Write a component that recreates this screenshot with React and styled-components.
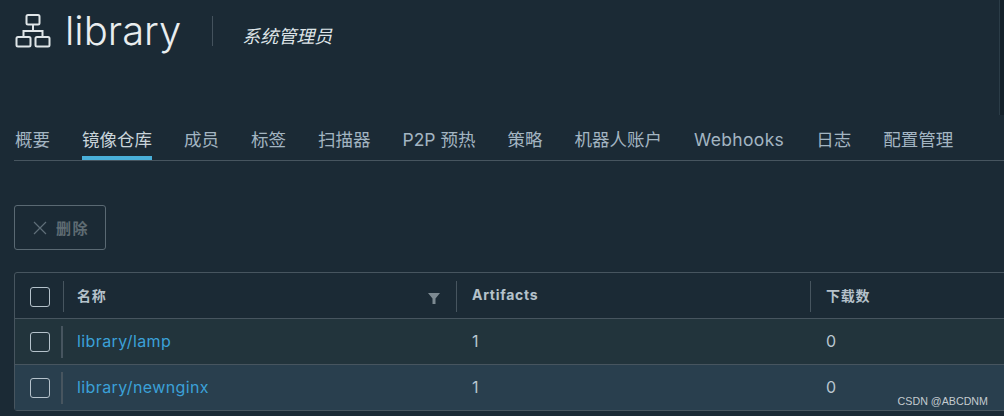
import styled, { createGlobalStyle } from "styled-components";

const fonts = `Inter, "Noto Sans CJK SC", sans-serif`;
const tabs = ["概要", "镜像仓库", "成员", "标签", "扫描器", "P2P 预热", "策略", "机器人账户", "Webhooks", "日志", "配置管理"];
const rows = [
  { name: "library/lamp", artifacts: 1, pulls: 0 },
  { name: "library/newnginx", artifacts: 1, pulls: 0, hover: true },
];

const GlobalStyle = createGlobalStyle`
  html, body {
    margin: 0;
    height: 416px;
    overflow: hidden;
    background: #1b2a35;
  }
`;

function ProjectIcon() {
  return (
    <svg width="36" height="36" viewBox="0 0 36 36" fill="none" stroke="#dfe5e8" strokeWidth="2">
      <rect x="11.5" y="2" width="13" height="9.5" rx="1.5" />
      <path d="M18 11.5V18M8.5 24v-6h19v6" />
      <rect x="1.5" y="24" width="14" height="9.5" rx="1.5" />
      <rect x="20.5" y="24" width="14" height="9.5" rx="1.5" />
    </svg>
  );
}

export default function App() {
  return (
    <Page>
      <GlobalStyle />
      <Header>
        <ProjectIcon />
        <Title>library</Title>
        <Divider />
        <Role>系统管理员</Role>
      </Header>
      <Tabs>
        {tabs.map(t => (
          <Tab key={t} $active={t === "镜像仓库"} $latin={t === "Webhooks"}>{t}</Tab>
        ))}
      </Tabs>
      <DeleteButton>
        <svg width="14" height="14" viewBox="0 0 14 14" stroke="#5f6e78" strokeWidth="1.2">
          <path d="M1 1l12 12M13 1L1 13" />
        </svg>
        删除
      </DeleteButton>
      <Table>
        <HeadRow>
          <CheckCell><Check /></CheckCell>
          <HeadCell $width="393px" $pad="13px">
            名称
            <svg width="12" height="11" viewBox="0 0 12 11" fill="#7d8a92">
              <path d="M0 0h12L7.5 5.5V11h-3V5.5z" />
            </svg>
          </HeadCell>
          <HeadCell $width="354px" $pad="15px">Artifacts</HeadCell>
          <HeadCell $pad="15px">下载数</HeadCell>
        </HeadRow>
        {rows.map(r => (
          <Row key={r.name} $hover={r.hover}>
            <CheckCell><Check /><Bar /></CheckCell>
            <NameCell>{r.name}</NameCell>
            <ValueCell $width="354px">{r.artifacts}</ValueCell>
            <ValueCell>{r.pulls}</ValueCell>
          </Row>
        ))}
      </Table>
      <EdgeBar />
      <Watermark>CSDN @ABCDNM</Watermark>
    </Page>
  );
}

const Page = styled.div`
  position: relative;
  width: 1004px;
  height: 416px;
  overflow: hidden;
  padding: 12px 0 0 14px;
  box-sizing: border-box;
  background: #1b2a35;
  font-family: ${fonts};
`;

const Header = styled.div`
  height: 38px;
  padding-left: 1px;
  display: flex;
  align-items: center;
  color: #e9edef;
`;

const Title = styled.h1`
  margin: 0 0 0 14px;
  font-size: 40px;
  font-weight: 300;
  line-height: 38px;
  color: #e9edef;
`;

const Divider = styled.div`
  width: 1px;
  height: 30px;
  margin: 0 29px 0 31px;
  background: #44525d;
`;

const Role = styled.span`
  margin-top: 7px;
  font-size: 18px;
  font-style: italic;
  color: #dfe5e8;
`;

const Tabs = styled.div`
  height: 37px;
  margin-top: 73px;
  display: flex;
  gap: 32px;
  border-bottom: 1px solid #47555f;
  padding-left: 1px;
`;

const Tab = styled.div`
  height: 37px;
  box-sizing: border-box;
  font-size: 17.5px;
  line-height: 34px;
  white-space: nowrap;
  letter-spacing: ${p => (p.$latin ? "0.35px" : "0")};
  color: ${p => (p.$active ? "#c9d4da" : "#a3b5c2")};
  border-bottom: ${p => (p.$active ? "4px solid #49afd9" : "none")};
`;

const DeleteButton = styled.button`
  display: flex;
  align-items: center;
  gap: 9px;
  width: 92px;
  height: 45px;
  margin-top: 44px;
  padding: 0 0 0 18px;
  box-sizing: border-box;
  background: transparent;
  border: 1px solid #5a6973;
  border-radius: 3px;
  color: #5f6c73;
  font-family: ${fonts};
  font-size: 15px;
  font-weight: 700;
  letter-spacing: 1.5px;
`;

const Table = styled.div`
  width: 1010px;
  margin-top: 22px;
  border: 1px solid #47555f;
  border-radius: 3px;
  background: #1b2a35;
`;

const HeadRow = styled.div`
  height: 45px;
  padding-top: 2px;
  box-sizing: border-box;
  display: flex;
  align-items: center;
  color: #b5c2cb;
  font-size: 14px;
  font-weight: 700;
  letter-spacing: 0.7px;
`;

const Row = styled.div`
  height: 45px;
  display: flex;
  align-items: center;
  border-top: 1px solid #47555f;
  background: ${p => (p.$hover ? "#293f4e" : "#22343c")};
`;

const CheckCell = styled.div`
  position: relative;
  width: 48px;
  flex: none;
  display: flex;
  padding-left: 15px;
  box-sizing: border-box;
`;

const Check = styled.div`
  width: 18px;
  height: 18px;
  border: 1px solid #b5c2cb;
  border-radius: 3px;
`;

const Bar = styled.div`
  position: absolute;
  left: 46px;
  top: -6px;
  width: 2px;
  height: 32px;
  background: #47555f;
`;

const HeadCell = styled.div`
  width: ${p => p.$width || "auto"};
  height: 31px;
  flex: none;
  box-sizing: border-box;
  display: flex;
  align-items: center;
  justify-content: space-between;
  padding: 0 16px 4px ${p => p.$pad};
  border-left: 1px solid #47555f;

  svg {
    margin-top: 7px;
  }
`;

const NameCell = styled.a`
  width: 409px;
  flex: none;
  box-sizing: border-box;
  padding: 0 0 1px 14px;
  color: #3ba1d8;
  font-size: 16px;
  letter-spacing: 0.4px;
`;

const ValueCell = styled.div`
  width: ${p => p.$width || "auto"};
  flex: none;
  padding-bottom: 1px;
  color: #b9c6cf;
  font-size: 16px;
`;

const EdgeBar = styled.div`
  position: absolute;
  right: 0;
  top: 0;
  width: 5px;
  height: 115px;
  background: #14212a;
  border-left: 1px solid #2b3c47;
  box-sizing: border-box;
`;

const Watermark = styled.div`
  position: absolute;
  right: 16px;
  bottom: 9px;
  color: #c4cbd0;
  font-family: "Liberation Sans", sans-serif;
  font-size: 10.7px;
`;
